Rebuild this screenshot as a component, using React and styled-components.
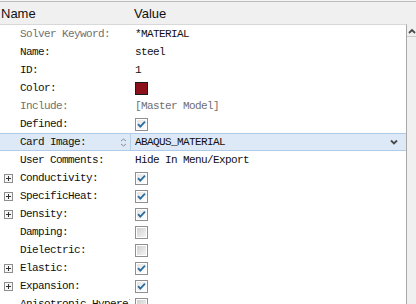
import React from 'react';
import styled, { createGlobalStyle } from 'styled-components';

const GlobalStyle = createGlobalStyle`
  html, body {
    margin: 0;
    background: #f4f4f4;
    overflow: hidden;
  }
`;

const rows = [
  { label: 'Solver Keyword:', dim: true, value: '*MATERIAL' },
  { label: 'Name:', value: 'steel' },
  { label: 'ID:', value: '1' },
  { label: 'Color:', color: '#8c0f1c' },
  { label: 'Include:', dim: true, value: '[Master Model]', dimValue: true },
  { label: 'Defined:', check: true },
  { label: 'Card Image:', value: 'ABAQUS_MATERIAL', active: true },
  { label: 'User Comments:', value: 'Hide In Menu/Export' },
  { label: 'Conductivity:', plus: true, check: true },
  { label: 'SpecificHeat:', plus: true, check: true },
  { label: 'Density:', plus: true, check: true },
  { label: 'Damping:', check: false },
  { label: 'Dielectric:', check: false },
  { label: 'Elastic:', plus: true, check: true },
  { label: 'Expansion:', plus: true, check: true },
  { label: 'Anisotropic Hyperelastic:', check: false },
];

function CheckBox({ on }) {
  return (
    <svg width="13" height="13" viewBox="0 0 13 13">
      <defs>
        <linearGradient id={on ? 'cbOn' : 'cbOff'} x1="0" y1="0" x2="1" y2="1">
          <stop offset="0" stopColor={on ? '#e4e4e4' : '#cfcfcf'} />
          <stop offset="1" stopColor={on ? '#ffffff' : '#f4f4f4'} />
        </linearGradient>
      </defs>
      <rect x="0.5" y="0.5" width="12" height="12" fill="#fff" stroke="#8f8f8f" />
      <rect x="2" y="2" width="9" height="9" fill={`url(#${on ? 'cbOn' : 'cbOff'})`} />
      {on && (
        <path d="M3 6.2 L5.3 8.6 L10 3.6" fill="none" stroke="#2a6e9e" strokeWidth="1.8" />
      )}
    </svg>
  );
}

function Expander() {
  return (
    <svg width="9" height="9" viewBox="0 0 9 9">
      <rect x="0.5" y="0.5" width="8" height="8" fill="#f7f7f7" stroke="#8d8d8d" />
      <path d="M2 4.5 H7 M4.5 2 V7" stroke="#333" strokeWidth="1" />
    </svg>
  );
}

function Spinner() {
  return (
    <svg width="7" height="9" viewBox="0 0 7 9">
      <path d="M1 3 L3.5 1 L6 3 M1 6 L3.5 8 L6 6" fill="none" stroke="#8a8a8a" strokeWidth="1" />
    </svg>
  );
}

function Chevron({ up }) {
  return (
    <svg width="8" height="6" viewBox="0 0 8 6">
      <path d={up ? 'M1 5 L4 2 L7 5' : 'M1 1.5 L4 4.5 L7 1.5'} fill="none" stroke="#4a4a4a" strokeWidth="1.8" />
    </svg>
  );
}

export default function App() {
  return (
    <>
      <GlobalStyle />
      <Frame>
        <Header>
          <HeadCell>Name</HeadCell>
          <HeadCell>Value</HeadCell>
        </Header>
        <Body>
          <Grid>
            {rows.map(r => (
              <Row key={r.label} active={r.active}>
                <LabelCell active={r.active}>
                  {r.plus ? <Expander /> : <Gap />}
                  <Label dim={r.dim}>{r.label}</Label>
                  {r.active && <SpinSlot><Spinner /></SpinSlot>}
                </LabelCell>
                <ValueCell>
                  {r.value && <Value dim={r.dimValue}>{r.value}</Value>}
                  {r.color && <Swatch color={r.color} />}
                  {r.check !== undefined && <CheckBox on={r.check} />}
                  {r.active && <DropSlot><Chevron /></DropSlot>}
                </ValueCell>
              </Row>
            ))}
          </Grid>
          <ScrollBar>
            <ScrollButton><Chevron up /></ScrollButton>
          </ScrollBar>
        </Body>
      </Frame>
    </>
  );
}

const Frame = styled.div`
  margin-top: 1px;
  width: 416px;
  height: 303px;
  display: flex;
  flex-direction: column;
  border-top: 1px solid #bdbdbd;
  box-sizing: border-box;
  background: #f0f0f0;
  overflow: hidden;
`
const Header = styled.div`
  height: 22px;
  flex: none;
  display: grid;
  grid-template-columns: 133px 1fr;
  padding-left: 1px;
  align-items: center;
  font-family: "Liberation Sans", Arial, sans-serif;
  font-size: 13px;
  color: #111;
`
const HeadCell = styled.div`
  padding-top: 1px;
`
const Body = styled.div`
  flex: 1;
  display: flex;
  min-height: 0;
`
const Grid = styled.div`
  flex: 1;
  background: #fff;
  border-top: 1px solid #d8d8d8;
  border-right: 1px solid #a8a8a8;
  overflow: hidden;
`
const Row = styled.div`
  height: 18px;
  display: grid;
  grid-template-columns: 131px 1fr;
  align-items: center;
  box-sizing: border-box;
  background: ${p => (p.active ? '#dde9f6' : 'transparent')};
  border-top: 1px solid ${p => (p.active ? '#b0cbe7' : 'transparent')};
  border-bottom: 1px solid ${p => (p.active ? '#b0cbe7' : 'transparent')};
  font-family: "Liberation Mono", "DejaVu Sans Mono", monospace;
  font-size: 11px;
  letter-spacing: -0.6px;
  color: #111;
`
const LabelCell = styled.div`
  height: 100%;
  display: flex;
  align-items: center;
  gap: 7px;
  padding-left: 4px;
  box-sizing: border-box;
  border-right: 1px solid ${p => (p.active ? '#b8cfe8' : 'transparent')};
  overflow: hidden;
  white-space: nowrap;
`
const Gap = styled.span`
  width: 9px;
  flex: none;
`
const Label = styled.span`
  flex: 1;
  color: ${p => (p.dim ? '#707070' : '#111')};
  overflow: hidden;
`
const SpinSlot = styled.span`
  width: 10px;
  display: flex;
  align-items: center;
  flex: none;
`
const ValueCell = styled.div`
  display: flex;
  align-items: center;
  padding-left: 4px;
  white-space: nowrap;
`
const Value = styled.span`
  flex: 1;
  color: ${p => (p.dim ? '#707070' : '#111')};
`
const Swatch = styled.span`
  width: 11px;
  height: 11px;
  background: ${p => p.color};
  border: 1px solid #1a1a1a;
`
const DropSlot = styled.span`
  width: 16px;
  display: flex;
  align-items: center;
  flex: none;
`
const ScrollBar = styled.div`
  width: 9px;
  flex: none;
  background: #f0f0f0;
  display: flex;
  flex-direction: column;
`
const ScrollButton = styled.div`
  height: 11px;
  margin-top: 1px;
  display: flex;
  align-items: center;
  justify-content: center;
  border-bottom: 1px solid #c9c9c9;
`
